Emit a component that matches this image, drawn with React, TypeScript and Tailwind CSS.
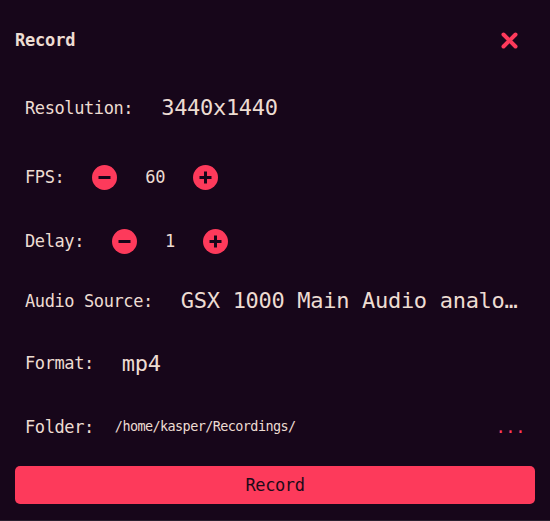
import React from "react";

const mono = { fontFamily: '"DejaVu Sans Mono", "Liberation Mono", monospace' };

function RoundBtn({ kind }: { kind: "minus" | "plus" }) {
  return (
    <svg width="25" height="25" viewBox="0 0 25 25" className="shrink-0">
      <circle cx="12.5" cy="12.5" r="12.5" fill="#fd3a5b" />
      <line x1="6.5" y1="12.5" x2="18.5" y2="12.5" stroke="#17061a" strokeWidth="3" />
      {kind === "plus" && (
        <line x1="12.5" y1="6.5" x2="12.5" y2="18.5" stroke="#17061a" strokeWidth="3" />
      )}
    </svg>
  );
}

export default function App() {
  const label = "text-[17px] tracking-[-0.4px] text-[#eddcd2] leading-none whitespace-pre";
  const value = "text-[22px] tracking-[-0.3px] text-[#eddcd2] leading-none whitespace-pre";
  return (
    <div
      className="w-[550px] h-[521px] bg-[#17061a] flex flex-col border-b border-[#2a2030] box-border"
      style={mono}
    >
      <div className="h-[81px] flex items-center justify-between pl-[15px] pr-[32px] shrink-0">
        <span className="text-[17px] font-bold tracking-[-0.2px] text-[#eddcd2] leading-none">Record</span>
        <svg width="17" height="17" viewBox="0 0 17 17">
          <line x1="2.5" y1="2.5" x2="14.5" y2="14.5" stroke="#fd3a5b" strokeWidth="4" strokeLinecap="round" />
          <line x1="14.5" y1="2.5" x2="2.5" y2="14.5" stroke="#fd3a5b" strokeWidth="4" strokeLinecap="round" />
        </svg>
      </div>

      <div className="h-[54px] flex items-center gap-7 px-[25px] shrink-0">
        <span className={label}>Resolution:</span>
        <span className={value}>3440x1440</span>
      </div>

      <div className="h-[84px] flex items-center gap-7 px-[25px] shrink-0">
        <span className={label}>FPS:</span>
        <RoundBtn kind="minus" />
        <span className={label}>60</span>
        <RoundBtn kind="plus" />
      </div>

      <div className="h-[44px] flex items-center gap-7 px-[25px] shrink-0">
        <span className={label}>Delay:</span>
        <RoundBtn kind="minus" />
        <span className={label}>1</span>
        <RoundBtn kind="plus" />
      </div>

      <div className="h-[76px] flex items-center gap-7 px-[25px] shrink-0 min-w-0">
        <span className={label}>Audio Source:</span>
        <span className="text-[22px] tracking-[-0.3px] text-[#eddcd2] leading-none whitespace-nowrap overflow-hidden text-ellipsis min-w-0 flex-1">
          GSX 1000 Main Audio analog-stereo
        </span>
      </div>

      <div className="h-[49px] flex items-center gap-7 px-[25px] shrink-0">
        <span className={label}>Format:</span>
        <span className={value}>mp4</span>
      </div>

      <div className="h-[78px] flex items-center px-[25px] shrink-0">
        <span className={label}>Folder:</span>
        <span className="ml-[21px] text-[13.5px] tracking-[-0.6px] text-[#eddcd2] leading-none flex-1">
          /home/kasper/Recordings/
        </span>
        <span className="text-[17px] tracking-[-0.4px] text-[#fd3a5b] leading-none">...</span>
      </div>

      <div className="px-[15px] shrink-0">
        <button className="w-full h-[38px] rounded-[5px] bg-[#fd3a5b] flex items-center justify-center text-[17px] tracking-[-0.4px] text-[#1c0a18] leading-none">
          Record
        </button>
      </div>
    </div>
  );
}
